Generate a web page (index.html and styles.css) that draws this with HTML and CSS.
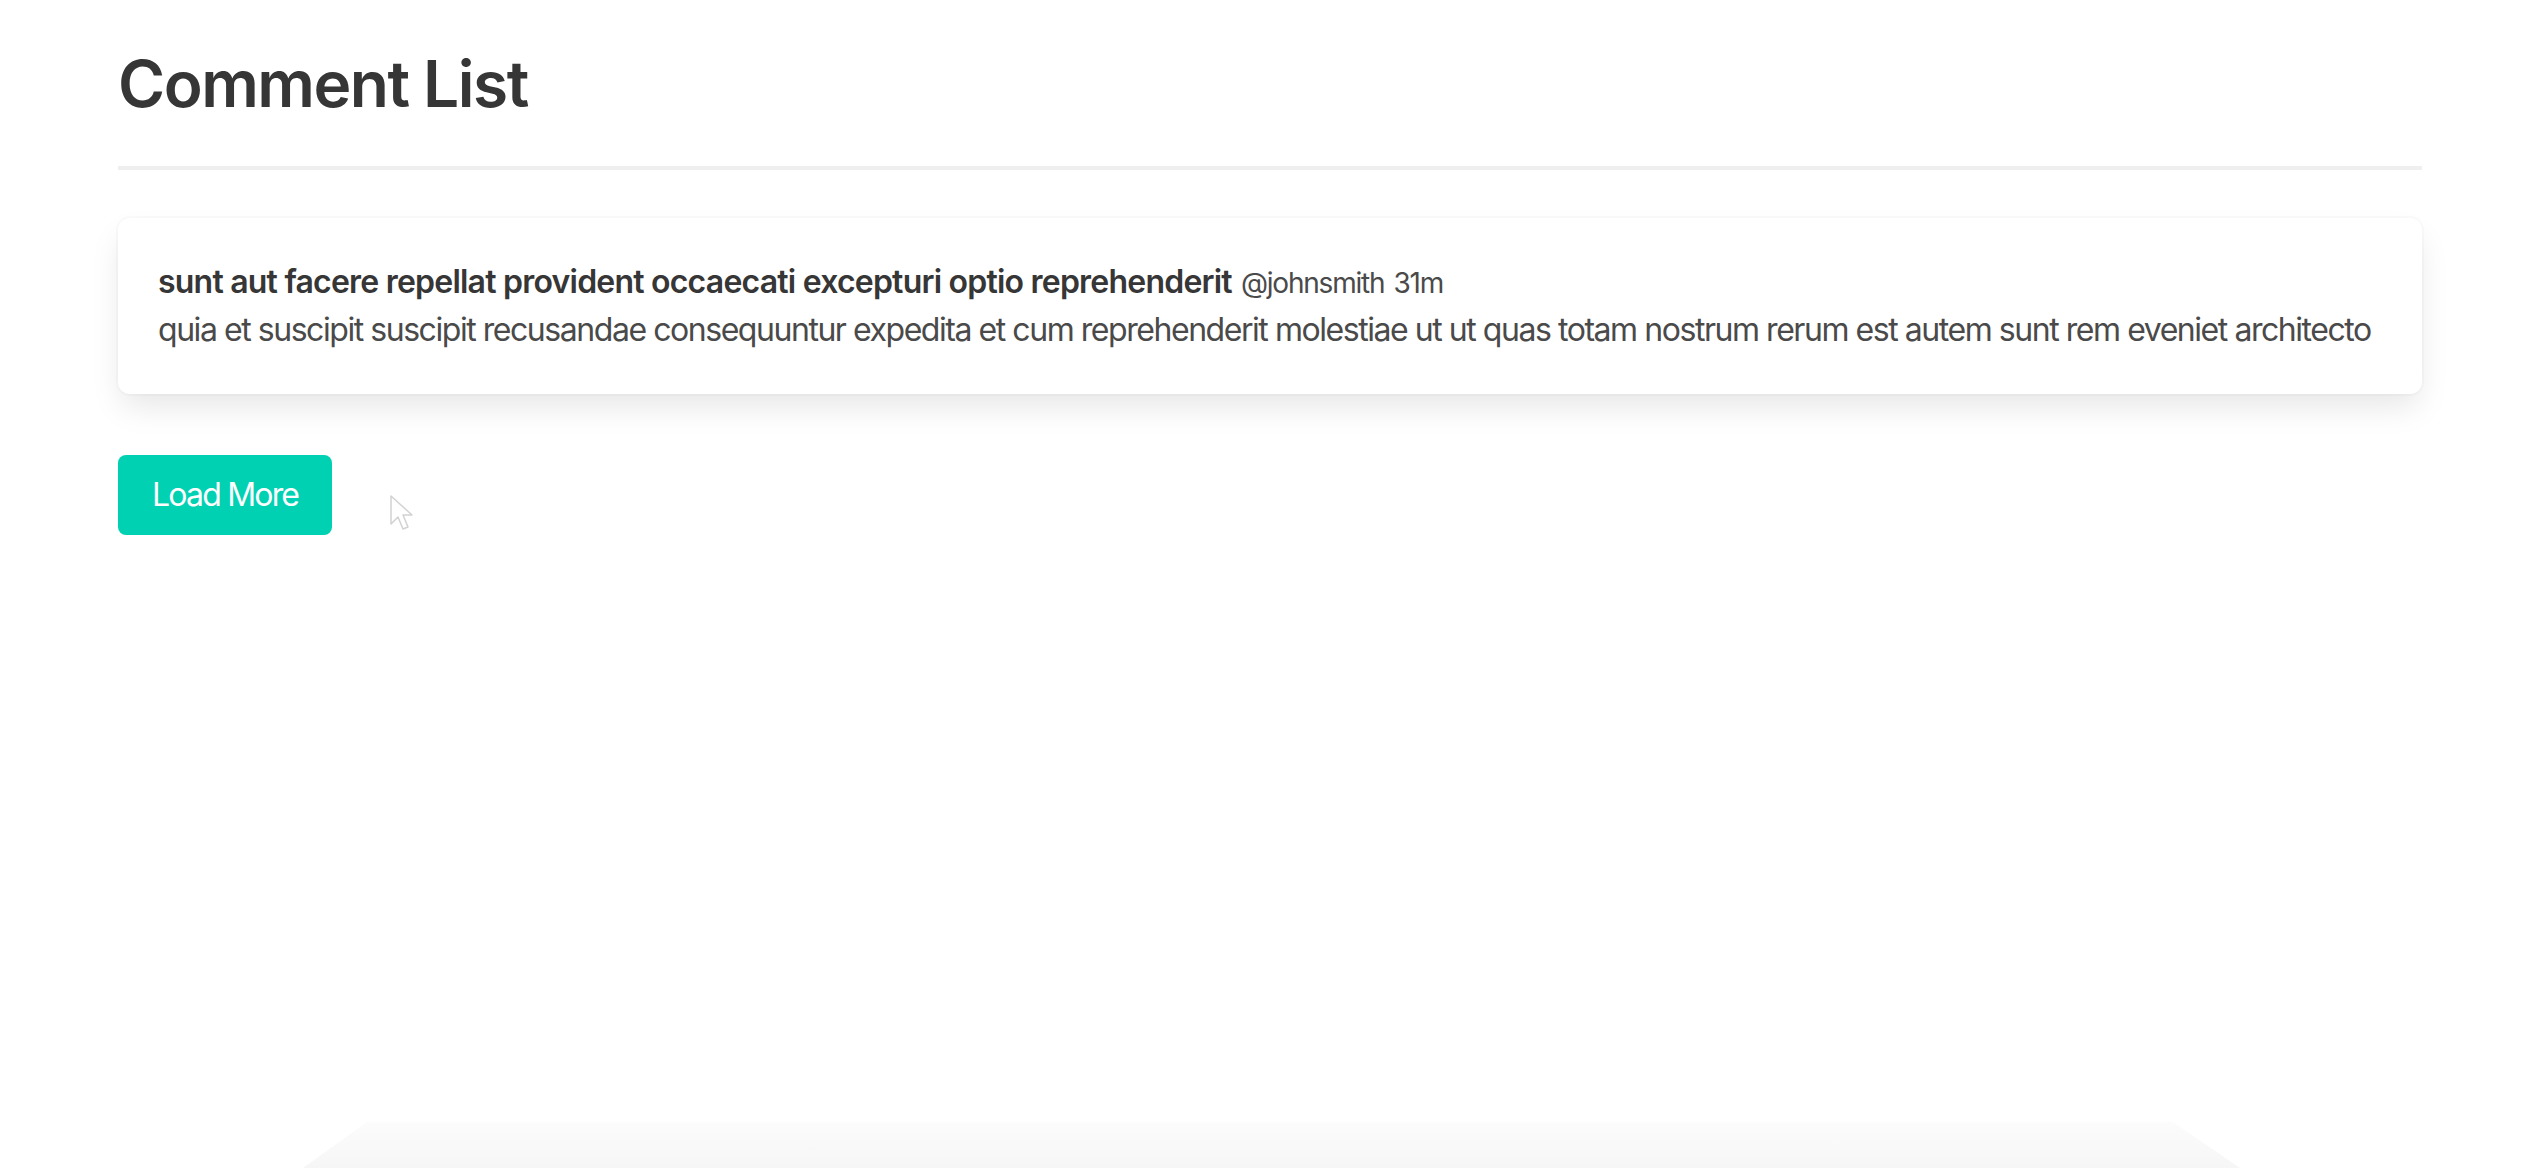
FILE: index.html
```html
<!DOCTYPE html>
<html lang="en">
<head>
<meta charset="utf-8">
<title>Comment List</title>
<link rel="stylesheet" href="styles.css">
</head>
<body>
<section class="section">
  <div class="container">
    <h1 class="title">Comment List</h1>
    <hr class="rule">
    <div class="box">
      <article class="media">
        <div class="content">
          <p><strong class="comment-title">sunt aut facere repellat provident occaecati excepturi optio reprehenderit</strong> <small class="meta">@johnsmith</small> <small class="meta">31m</small><br><span class="comment-body">quia et suscipit suscipit recusandae consequuntur expedita et cum reprehenderit molestiae ut ut quas totam nostrum rerum est autem sunt rem eveniet architecto</span></p>
        </div>
      </article>
    </div>
    <button class="button" type="button">Load More</button>
  </div>
</section>
<div class="cursor" aria-hidden="true">
  <svg width="26" height="38" viewBox="0 0 26 38"><path d="M2 2 L2 30 L9 23 L14 35 L19 33 L14 21 L23 21 Z" fill="#ffffff" stroke="#c8c8c8" stroke-width="1.5" stroke-linejoin="round"/></svg>
</div>
<div class="bottom-shade" aria-hidden="true"></div>
</body>
</html>
```
FILE: styles.css
```css
html, body {
  margin: 0;
  background: #ffffff;
}
body {
  font-family: Inter, "Noto Sans", "Liberation Sans", sans-serif;
  font-size: 32px;
  line-height: 1.5;
  color: #4a4a4a;
}
.section {
  padding: 46px 0;
}
.container {
  width: 2304px;
  margin: 0 auto;
}
.title {
  margin: 0;
  padding-top: 2px;
  font-size: 64px;
  font-weight: 600;
  line-height: 1.125;
  color: #363636;
  letter-spacing: -1.5px;
}
.rule {
  display: block;
  height: 4px;
  border: 0;
  background: #efefef;
  margin: 46px 0 48px;
}
.box {
  background: #ffffff;
  border-radius: 12px;
  padding: 40px;
  margin-bottom: 61px;
  box-shadow: 0 16px 32px -4px rgba(10, 10, 10, 0.1), 0 0 0 2px rgba(10, 10, 10, 0.02);
}
.media {
  display: flex;
}
.content p {
  margin: 0;
  white-space: nowrap;
}
.comment-title {
  font-weight: 600;
  color: #363636;
  letter-spacing: -0.78px;
}
.meta {
  font-size: 28px;
  letter-spacing: -1.2px;
}
.comment-body {
  letter-spacing: -1.45px;
}
.button {
  font-family: inherit;
  font-size: 32px;
  line-height: 1.5;
  letter-spacing: -1.8px;
  background: #00d1b2;
  color: #ffffff;
  border: 0;
  border-radius: 8px;
  height: 80px;
  padding: 0 34px;
}
.cursor {
  position: absolute;
  left: 389px;
  top: 494px;
  opacity: 0.8;
}
.bottom-shade {
  position: fixed;
  left: 303px;
  right: 300px;
  bottom: 0;
  height: 46px;
  background: linear-gradient(to bottom, #fcfcfc, #f6f6f6);
  clip-path: polygon(64px 0, calc(100% - 67px) 0, 100% 100%, 0 100%);
}
```
